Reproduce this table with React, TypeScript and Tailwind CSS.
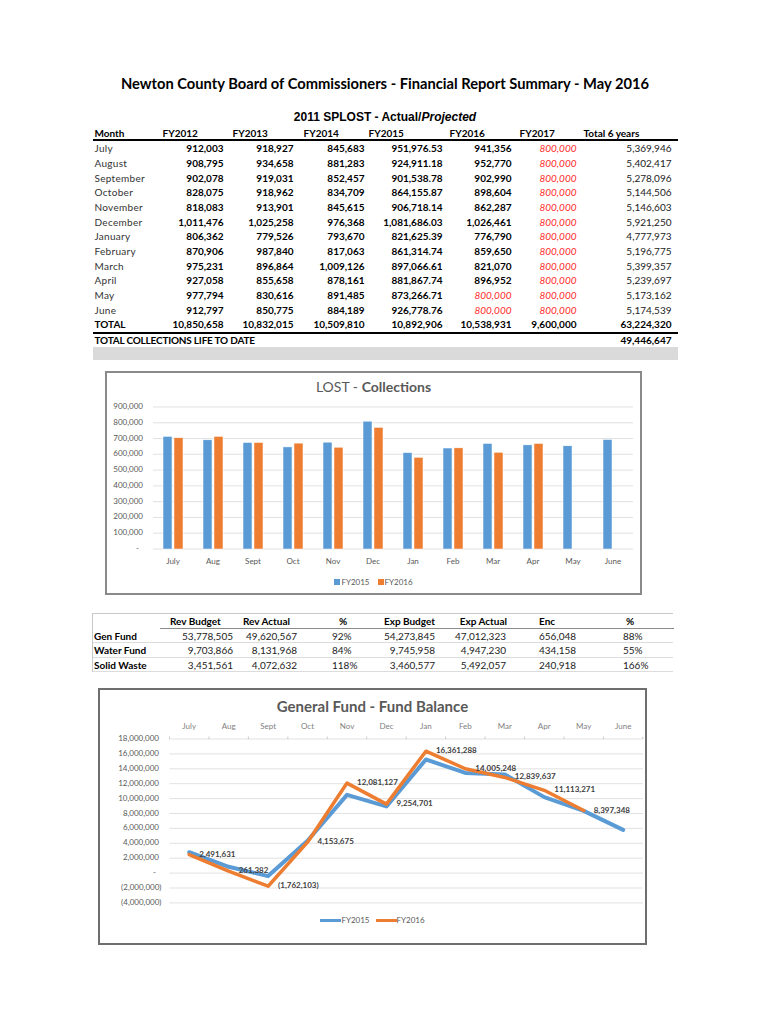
const months = ['July', 'Aug', 'Sept', 'Oct', 'Nov', 'Dec', 'Jan', 'Feb', 'Mar', 'Apr', 'May', 'June']

type Row = { month: string; values: string[]; projected: boolean[] }

const splost: Row[] = [
  { month: 'July', values: ['912,003', '918,927', '845,683', '951,976.53', '941,356', '800,000', '5,369,946'], projected: [false, false, false, false, false, true, false] },
  { month: 'August', values: ['908,795', '934,658', '881,283', '924,911.18', '952,770', '800,000', '5,402,417'], projected: [false, false, false, false, false, true, false] },
  { month: 'September', values: ['902,078', '919,031', '852,457', '901,538.78', '902,990', '800,000', '5,278,096'], projected: [false, false, false, false, false, true, false] },
  { month: 'October', values: ['828,075', '918,962', '834,709', '864,155.87', '898,604', '800,000', '5,144,506'], projected: [false, false, false, false, false, true, false] },
  { month: 'November', values: ['818,083', '913,901', '845,615', '906,718.14', '862,287', '800,000', '5,146,603'], projected: [false, false, false, false, false, true, false] },
  { month: 'December', values: ['1,011,476', '1,025,258', '976,368', '1,081,686.03', '1,026,461', '800,000', '5,921,250'], projected: [false, false, false, false, false, true, false] },
  { month: 'January', values: ['806,362', '779,526', '793,670', '821,625.39', '776,790', '800,000', '4,777,973'], projected: [false, false, false, false, false, true, false] },
  { month: 'February', values: ['870,906', '987,840', '817,063', '861,314.74', '859,650', '800,000', '5,196,775'], projected: [false, false, false, false, false, true, false] },
  { month: 'March', values: ['975,231', '896,864', '1,009,126', '897,066.61', '821,070', '800,000', '5,399,357'], projected: [false, false, false, false, false, true, false] },
  { month: 'April', values: ['927,058', '855,658', '878,161', '881,867.74', '896,952', '800,000', '5,239,697'], projected: [false, false, false, false, false, true, false] },
  { month: 'May', values: ['977,794', '830,616', '891,485', '873,266.71', '800,000', '800,000', '5,173,162'], projected: [false, false, false, false, true, true, false] },
  { month: 'June', values: ['912,797', '850,775', '884,189', '926,778.76', '800,000', '800,000', '5,174,539'], projected: [false, false, false, false, true, true, false] },
]

const totals = ['10,850,658', '10,832,015', '10,509,810', '10,892,906', '10,538,931', '9,600,000', '63,224,320']

const headers = ['FY2012', 'FY2013', 'FY2014', 'FY2015', 'FY2016', 'FY2017', 'Total 6 years']
const headerPad = ['pl-[7px]', 'pl-[7px]', 'pl-[8px]', 'pl-[2px]', 'pl-[5px]', 'pl-[6px]', 'pl-[5px]']
const valuePad = ['pr-[2px]', 'pr-[2px]', 'pr-[2px]', 'pr-[2px]', 'pr-[2px]', 'pr-[2px]', 'pr-[6px]']

const splostGrid = 'grid grid-cols-[63px_70px_70px_71px_78px_69px_65px_99px]'

function SplostTable() {
  return (
    <div className="mt-[2px] text-[10px]">
      <div className={`${splostGrid} h-[15px] items-center border-b-2 border-black font-bold`}>
        <div className="pl-[2px]">Month</div>
        {headers.map((h, i) => (
          <div key={h} className={headerPad[i]}>{h}</div>
        ))}
      </div>

      {splost.map(row => (
        <div key={row.month} className={`${splostGrid} h-[14.67px] items-center leading-none`}>
          <div className="pl-[2px] tracking-[0.3px] text-[#333]">{row.month}</div>
          {row.values.map((v, i) => (
            <div
              key={i}
              className={`text-right ${valuePad[i]} ${
                row.projected[i] ? 'italic text-[#ff2a2a]' : i === 6 ? 'text-[#222]' : 'font-bold'
              }`}
            >
              {v}
            </div>
          ))}
        </div>
      ))}

      <div className={`${splostGrid} h-[16.67px] items-center border-b-2 border-black font-bold leading-none`}>
        <div className="pl-[2px]">TOTAL</div>
        {totals.map((v, i) => (
          <div key={i} className={`text-right ${valuePad[i]}`}>{v}</div>
        ))}
      </div>

      <div className="flex h-[13.3px] items-center justify-between font-bold leading-none">
        <div className="pl-[2px] tracking-[-0.2px]">TOTAL COLLECTIONS LIFE TO DATE</div>
        <div className="pr-[6px]">49,446,647</div>
      </div>
      <div className="h-[13px] bg-[#dadada]" />
    </div>
  )
}

function BarChart() {
  const fy15 = [714, 692, 675, 647, 677, 810, 611, 640, 669, 660, 654, 694]
  const fy16 = [705, 714, 675, 671, 645, 771, 581, 641, 613, 669]
  const base = 549
  const step = 15.78
  const ticks = [0, 1, 2, 3, 4, 5, 6, 7, 8, 9]
  const h = (v: number) => (v / 100) * step

  return (
    <div className="ml-[12.5px] mt-[11px] flex h-[224px] w-[537px] flex-col border-2 border-[#8a8a8a]">
      <div className="h-[28px] text-center text-[14px] leading-[28px] text-[#595959]">
        LOST - <span className="font-bold">Collections</span>
      </div>
      <svg width="533" height="170" viewBox="107 401 533 170" fontFamily="Lato, sans-serif">
        {ticks.map(t => (
          <g key={t}>
            <line x1="153" x2="633" y1={base - t * step} y2={base - t * step} stroke="#d9d9d9" strokeWidth="0.8" />
            <text x={t === 0 ? 139 : 143} y={base - t * step} fontSize="8" fill="#595959" textAnchor="end" dominantBaseline="middle">
              {t === 0 ? '-' : `${t}00,000`}
            </text>
          </g>
        ))}
        {months.map((m, c) => {
          const cx = 173 + c * 40
          return (
            <g key={m}>
              <rect x={cx - 10} y={base - h(fy15[c])} width="9" height={h(fy15[c])} fill="#5b9bd5" stroke="#ffffff" strokeWidth="0.5" />
              {fy16[c] !== undefined && (
                <rect x={cx + 1} y={base - h(fy16[c])} width="9" height={h(fy16[c])} fill="#ed7d31" stroke="#ffffff" strokeWidth="0.5" />
              )}
              <text x={cx} y="562" fontSize="8" fill="#595959" textAnchor="middle" dominantBaseline="middle">
                {m}
              </text>
            </g>
          )
        })}
      </svg>
      <div className="flex h-[22px] items-center justify-center text-[8px] text-[#595959]">
        <span className="mr-[1px] h-[6px] w-[6px] bg-[#5b9bd5]" />
        <span>FY2015</span>
        <span className="ml-[8px] mr-[1px] h-[6px] w-[6px] bg-[#ed7d31]" />
        <span>FY2016</span>
      </div>
    </div>
  )
}

const funds = [
  ['Gen Fund', '53,778,505', '49,620,567', '92%', '54,273,845', '47,012,323', '656,048', '88%'],
  ['Water Fund', '9,703,866', '8,131,968', '84%', '9,745,958', '4,947,230', '434,158', '55%'],
  ['Solid Waste', '3,451,561', '4,072,632', '118%', '3,460,577', '5,492,057', '240,918', '166%'],
]
const fundHeaders = ['Rev Budget', 'Rev Actual', '%', 'Exp Budget', 'Exp Actual', 'Enc', '%']
const fundHeadCls = ['pl-[10px]', 'pl-[6px]', 'pl-[38px]', 'text-right pr-[6px]', 'text-right pr-[4px]', 'pl-[28px]', 'pl-[35px]']
const fundCellCls = ['text-right pr-[4px]', 'text-right pr-[4px]', 'pl-[31px]', 'text-right pr-[6px]', 'text-right pr-[5px]', 'pl-[28px]', 'pl-[32px]']
const fundGrid = 'grid grid-cols-[67px_77px_64px_78px_62px_70px_80px_83px]'

function FundTable() {
  return (
    <div className="mt-[18px] ml-[-0.5px] w-[581px] border-t border-l border-[#c8c8c8] text-[10px] leading-none">
      <div className={`${fundGrid} h-[15px]`}>
        <div />
        {fundHeaders.map((h, i) => (
          <div key={i} className={`flex items-center border-b border-[#8c8c8c] font-bold ${fundHeadCls[i]} ${i === 3 || i === 4 ? 'justify-end' : ''}`}>
            {h}
          </div>
        ))}
      </div>
      {funds.map(r => (
        <div key={r[0]} className={`${fundGrid} h-[14.5px] items-center border-b border-[#dcdcdc]`}>
          <div className="pl-[1px] font-bold">{r[0]}</div>
          {r.slice(1).map((v, i) => (
            <div key={i} className={`text-[#222] ${fundCellCls[i]}`}>{v}</div>
          ))}
        </div>
      ))}
    </div>
  )
}

function LineChart() {
  const fy15 = [2.8, 0.85, -0.4, 4.35, 10.5, 8.95, 15.25, 13.45, 13.25, 10.2, 8.35, 5.8]
  const fy16 = [2.491631, 0.261382, -1.762103, 4.153675, 12.081127, 9.254701, 16.361288, 14.005248, 12.839637, 11.113271, 8.397348]
  const labels = ['2,491,631', '261,382', '(1,762,103)', '4,153,675', '12,081,127', '9,254,701', '16,361,288', '14,005,248', '12,839,637', '11,113,271', '8,397,348']
  const px = (c: number) => 189.2 + 39.45 * c
  const py = (v: number) => 740 + (18 - v) * 7.45
  const grid = [18, 16, 14, 12, 10, 8, 6, 4, 2, 0, -2, -4]
  const fmt = (v: number) => {
    if (v === 0) return '-'
    const s = `${Math.abs(v)},000,000`
    return v < 0 ? `(${s})` : s
  }
  const pts = (arr: number[]) => arr.map((v, c) => `${px(c)},${py(v)}`).join(' ')

  return (
    <div className="ml-[5.5px] mt-[16px] flex h-[257px] w-[549px] flex-col border-2 border-[#6e6e6e]">
      <div className="h-[32px] text-center text-[15px] font-bold leading-[32px] text-[#595959]">General Fund - Fund Balance</div>
      <svg width="545" height="189" viewBox="100 723 545 189" fontFamily="Lato, sans-serif">
        {months.map((m, c) => (
          <text key={m} x={px(c)} y="728" fontSize="8" fill="#7f7f7f" textAnchor="middle" dominantBaseline="middle">
            {m}
          </text>
        ))}
        {grid.map(g => (
          <g key={g}>
            <line x1="169.5" x2="643" y1={py(g)} y2={py(g)} stroke="#d9d9d9" strokeWidth="0.8" />
            <text x={g < 0 ? 161.5 : g === 0 ? 156 : 159} y={py(g)} fontSize="8" fill="#595959" textAnchor="end" dominantBaseline="middle">
              {fmt(g)}
            </text>
          </g>
        ))}
        {Array.from({ length: 13 }, (_, i) => (
          <line key={i} x1={169.5 + 39.45 * i} x2={169.5 + 39.45 * i} y1="737.5" y2="740" stroke="#bfbfbf" strokeWidth="0.8" />
        ))}
        <polyline points={pts(fy15)} fill="none" stroke="#5b9bd5" strokeWidth="4" strokeLinejoin="round" strokeLinecap="round" />
        <polyline points={pts(fy16)} fill="none" stroke="#ed7d31" strokeWidth="3.5" strokeLinejoin="round" strokeLinecap="round" />
        {labels.map((l, c) => (
          <text key={l} x={px(c) + 10} y={py(fy16[c])} fontSize="8" fontWeight="bold" fill="#404040" dominantBaseline="middle">
            {l}
          </text>
        ))}
      </svg>
      <div className="flex h-[18px] items-center justify-center text-[8px] text-[#595959]">
        <span className="h-[3px] w-[21px] bg-[#5b9bd5]" />
        <span>FY2015</span>
        <span className="ml-[6px] h-[3px] w-[21px] bg-[#ed7d31]" />
        <span>FY2016</span>
      </div>
    </div>
  )
}

export default function App() {
  return (
    <div className="min-h-[1024px] w-[770px] bg-white font-['Lato',sans-serif] text-black">
      <div className="mx-auto w-[585px] pt-[73px]">
        <h1 className="h-[20px] whitespace-nowrap text-center text-[14.7px] font-bold leading-[20px]">
          Newton County Board of Commissioners - Financial Report Summary - May 2016
        </h1>
        <div className="mt-[17px] h-[14px] text-center font-['Liberation_Sans',Arial,sans-serif] text-[12px] font-bold leading-[14px]">
          2011 SPLOST - Actual/<span className="italic">Projected</span>
        </div>
        <SplostTable />
        <BarChart />
        <FundTable />
        <LineChart />
      </div>
    </div>
  )
}
